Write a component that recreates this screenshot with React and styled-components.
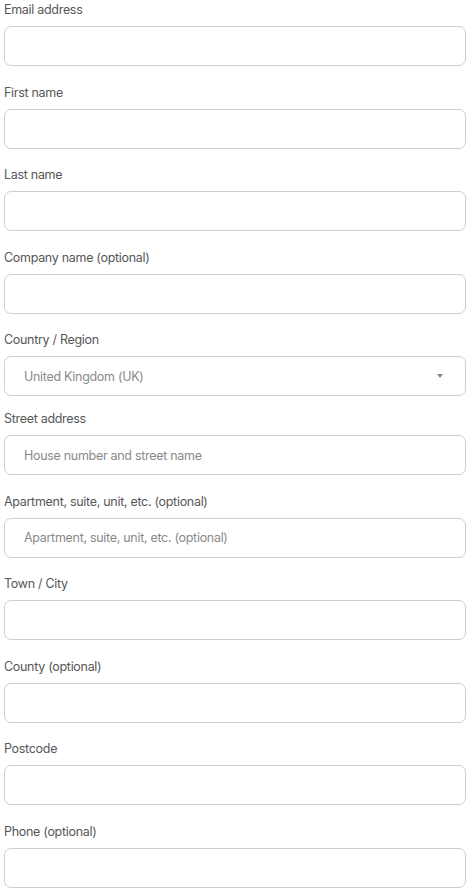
import React from 'react';
import styled, { createGlobalStyle } from 'styled-components';

const GlobalStyle = createGlobalStyle`
    html, body {
        margin: 0;
        padding: 0;
        background: #fff;
    }
    body {
        font-family: Inter, "Noto Sans", sans-serif;
    }
`;

const Form = styled.form`
    display: flex;
    flex-direction: column;
    padding: 0 4px;
    width: 462px;
`;

const Field = styled.div`
    display: flex;
    flex-direction: column;
    gap: 8px;
    margin-bottom: ${(p) => (p.$tight ? '13px' : '16.5px')};
`;

const Label = styled.label`
    padding-top: 1px;
    font-size: 12.5px;
    line-height: 17px;
    color: #575757;
    letter-spacing: -0.3px;
`;

const Input = styled.input`
    box-sizing: border-box;
    height: 40px;
    width: 100%;
    border: 1px solid #cfcfcf;
    border-radius: 7px;
    padding: 0 19px;
    font-family: inherit;
    font-size: 12.5px;
    letter-spacing: -0.3px;
    color: #444;
    background: #fff;
    outline: none;

    &::placeholder {
        color: #8a8a8a;
    }
`;

const SelectBox = styled.div`
    box-sizing: border-box;
    height: 40px;
    width: 100%;
    border: 1px solid #cfcfcf;
    border-radius: 7px;
    padding: 0 22px 0 19px;
    display: flex;
    align-items: center;
    justify-content: space-between;
    font-size: 12.5px;
    letter-spacing: -0.3px;
    color: #8a8a8a;
`;

const Caret = styled.span`
    width: 0;
    height: 0;
    border-left: 3px solid transparent;
    border-right: 3px solid transparent;
    border-top: 4px solid #888;
`;

const fields = [
    { label: 'Email address' },
    { label: 'First name' },
    { label: 'Last name' },
    { label: 'Company name (optional)' },
    { label: 'Country / Region', select: 'United Kingdom (UK)' },
    { label: 'Street address', placeholder: 'House number and street name' },
    { label: 'Apartment, suite, unit, etc. (optional)', placeholder: 'Apartment, suite, unit, etc. (optional)' },
    { label: 'Town / City' },
    { label: 'County (optional)' },
    { label: 'Postcode' },
    { label: 'Phone (optional)' },
];

const App = () => {
    return (
        <>
            <GlobalStyle />
            <Form>
                {fields.map((f) => (
                    <Field key={f.label} $tight={!!f.select}>
                        <Label>{f.label}</Label>
                        {f.select ? (
                            <SelectBox>
                                <span>{f.select}</span>
                                <Caret />
                            </SelectBox>
                        ) : (
                            <Input placeholder={f.placeholder || ''} />
                        )}
                    </Field>
                ))}
            </Form>
        </>
    );
};

export default App;
